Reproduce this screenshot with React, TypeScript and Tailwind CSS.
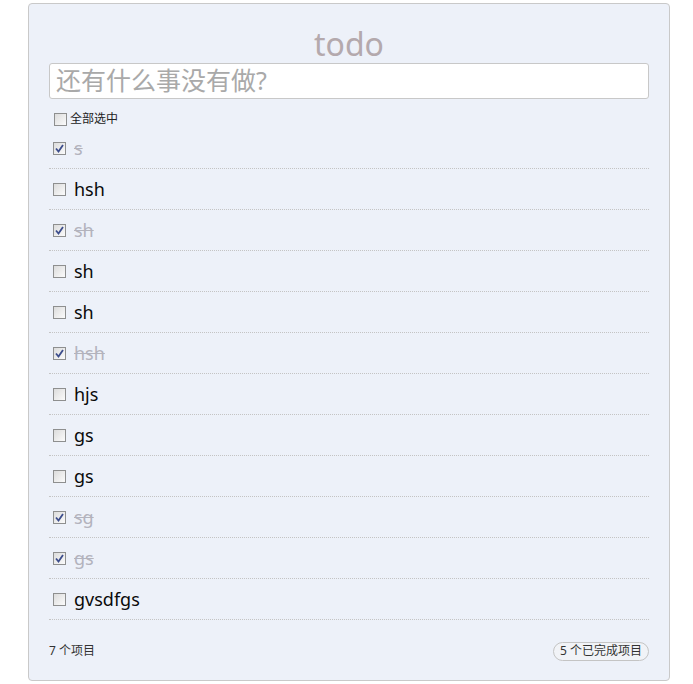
import React from "react";

type Todo = { title: string; done: boolean };

const todos: Todo[] = [
  { title: "s", done: true },
  { title: "hsh", done: false },
  { title: "sh", done: true },
  { title: "sh", done: false },
  { title: "sh", done: false },
  { title: "hsh", done: true },
  { title: "hjs", done: false },
  { title: "gs", done: false },
  { title: "gs", done: false },
  { title: "sg", done: true },
  { title: "gs", done: true },
  { title: "gvsdfgs", done: false },
];

// old-school grey checkbox with a blue tick
const Check = ({ checked }: { checked: boolean }) => (
  <span className="w-[13px] h-[13px] shrink-0 border border-[#8e8f8f] bg-gradient-to-br from-[#dcdcdc] to-[#fbfbfb] flex items-center justify-center">
    {checked && (
      <svg width="9" height="9" viewBox="0 0 9 9">
        <path d="M1 4.5 L3.5 7.5 L8 1" fill="none" stroke="#3c4d8c" strokeWidth="1.8" />
      </svg>
    )}
  </span>
);

const App = () => {
  const left = todos.filter((t) => !t.done).length;
  const done = todos.length - left;

  return (
    <div className="w-[693px] h-[684px] bg-white font-['Noto_Sans','Noto_Sans_CJK_SC',sans-serif]">
      <div className="ml-[28px] mt-[3px] w-[642px] h-[678px] bg-[#edf1f9] border border-[#c9c9c9] rounded-[4px] px-5">
        {/* Title */}
        <h1 className="mt-[22px] h-[36px] leading-[36px] text-center text-[32px] text-[#b4a9ad]">
          todo
        </h1>

        {/* New todo */}
        <input
          placeholder="还有什么事没有做?"
          className="mt-px w-full h-[36px] bg-white border border-[#c8c8c8] rounded-[3px] px-[6px] text-[25px] placeholder:text-[#a9a9a9] outline-none"
        />

        {/* Toggle all */}
        <div className="mt-[11px] h-[18px] flex items-center gap-[3px] pl-[5px] text-[12px] text-[#222]">
          <Check checked={false} />
          <span>全部选中</span>
        </div>

        {/* List */}
        <ul>
          {todos.map((t, i) => (
            <li
              key={i}
              className="h-[41px] border-b border-dotted border-[#c4c4c4] flex items-center gap-[8px] pl-[4px]"
            >
              <Check checked={t.done} />
              <span
                className={
                  t.done
                    ? "text-[18px] text-[#b3b3bd] line-through"
                    : "text-[18px] text-[#0a0a0a]"
                }
              >
                {t.title}
              </span>
            </li>
          ))}
        </ul>

        {/* Footer */}
        <div className="mt-[21px] h-[20px] flex items-center justify-between text-[12px] text-[#333]">
          <span>{left} 个项目</span>
          <button className="h-[19px] px-[6px] rounded-full border border-[#c4c4c4] bg-[#f1f3f7] text-[12px] text-[#333] leading-none">
            {done} 个已完成项目
          </button>
        </div>
      </div>
    </div>
  );
};

export default App;
